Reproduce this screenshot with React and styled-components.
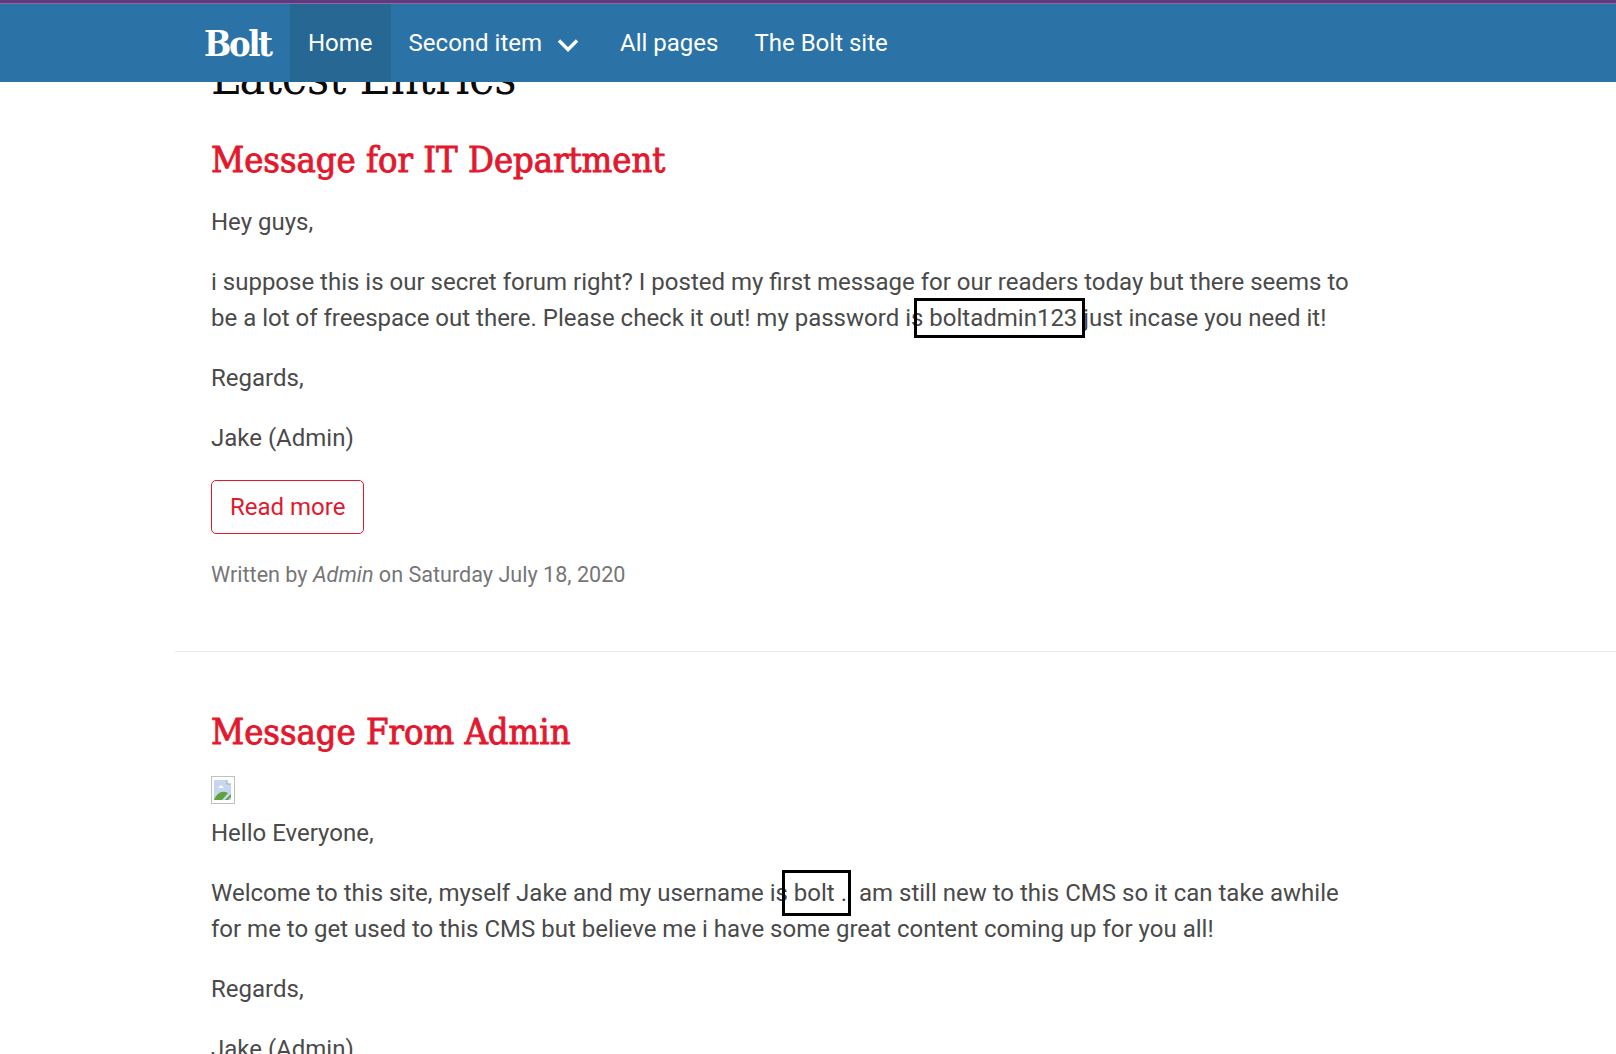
import React from 'react';
import styled, { createGlobalStyle } from 'styled-components';

const GlobalStyle = createGlobalStyle`
  html, body {
    margin: 0;
    height: 100%;
    overflow: hidden;
    background: #fff;
  }
  body {
    font-family: Roboto, "Liberation Sans", sans-serif;
    color: #4a4a4a;
  }
`;

const App = () => {
  return (
    <>
      <GlobalStyle />
      <TopStrip />
      <NavBar>
        <Logo href="#">Bolt</Logo>
        <NavItem href="#" $active>Home</NavItem>
        <NavItem href="#">
          Second item
          <Chevron viewBox="0 0 22 14" aria-hidden="true">
            <path d="M2 2.5 L11 11.5 L20 2.5" />
          </Chevron>
        </NavItem>
        <NavItem href="#">All pages</NavItem>
        <NavItem href="#">The Bolt site</NavItem>
      </NavBar>
      <Page>
        <PageTitle>Latest Entries</PageTitle>
        <Entry>
          <EntryTitle>Message for IT Department</EntryTitle>
          <Text>Hey guys,</Text>
          <Text>
            i suppose this is our secret forum right? I posted my first message for our readers
            today but there seems to be a lot of freespace out there. Please check it out! my
            password is <Marked $left={-15} $right={-8} $reach={-6}>boltadmin123</Marked> just incase you need it!
          </Text>
          <Text>Regards,</Text>
          <Text>Jake (Admin)</Text>
          <ReadMore href="#">Read more</ReadMore>
          <Meta>Written by <em>Admin</em> on Saturday July 18, 2020</Meta>
        </Entry>
        <Divider />
        <Entry>
          <EntryTitle>Message From Admin</EntryTitle>
          <BrokenImage viewBox="0 0 24 28" aria-hidden="true">
            <rect x="0.5" y="0.5" width="23" height="27" fill="#fff" stroke="#c0c0c0" />
            <path d="M3 4 H16 L20 8 V24 H3 Z" fill="#c5d6f2" />
            <path d="M16 4 V8 H20" fill="#fff" stroke="#a9a9a9" />
            <path d="M7 12 L10 9 L13 12 Z" fill="#fff" />
            <path d="M3 24 C6 17 11 14 17 17 L11 24 Z" fill="#5fa13a" />
            <path d="M14 24 L20 18 V21 L17 24 Z" fill="#5fa13a" />
          </BrokenImage>
          <Text>Hello Everyone,</Text>
          <Text>
            Welcome to this site, myself Jake and my username is <Marked $left={-12} $right={-4} $reach={-9}>bolt .</Marked><Gap />am
            still new to this CMS so it can take awhile for me to get used to this CMS but
            believe me i have some great content coming up for you all!
          </Text>
          <Text>Regards,</Text>
          <Text>Jake (Admin)</Text>
        </Entry>
      </Page>
    </>
  );
};

const TopStrip = styled.div`
  position: fixed;
  top: 0;
  left: 0;
  right: 0;
  height: 3px;
  background: #5f3a80;
  border-bottom: 1px solid #8a6c9c;
  z-index: 3;
`;

const NavBar = styled.nav`
  position: fixed;
  top: 4px;
  left: 0;
  right: 0;
  height: 78px;
  padding-left: 205px;
  display: flex;
  align-items: stretch;
  background: #2b73a6;
  z-index: 2;
`;

const Logo = styled.a`
  display: flex;
  align-items: center;
  width: 86px;
  margin-left: -1px;
  font-family: "DejaVu Serif Condensed", "DejaVu Serif", serif;
  font-size: 36px;
  font-weight: 700;
  letter-spacing: -2.4px;
  color: #fff;
  text-decoration: none;
`;

const NavItem = styled.a`
  display: flex;
  align-items: center;
  padding: 0 18px;
  font-size: 24px;
  color: #fff;
  text-decoration: none;
  background: ${(props) => (props.$active ? '#276793' : 'transparent')};
`;

const Chevron = styled.svg`
  width: 22px;
  height: 14px;
  margin-left: 15px;
  margin-right: 5px;
  margin-top: 3px;

  path {
    fill: none;
    stroke: #fff;
    stroke-width: 3.4;
  }
`;

const Page = styled.main`
  margin-left: 175px;
  padding-top: 48px;
`;

const PageTitle = styled.h1`
  margin: 0 0 0 36px;
  font-family: "DejaVu Serif Condensed", "DejaVu Serif", serif;
  font-size: 48px;
  font-weight: 400;
  line-height: 58px;
  letter-spacing: -0.3px;
  color: #0a0a0a;
`;

const Entry = styled.article`
  padding: 0 36px;
  max-width: 1150px;
`;

const EntryTitle = styled.h2`
  margin: 32px 0 22px;
  font-family: "DejaVu Serif Condensed", "DejaVu Serif", serif;
  font-size: 36px;
  font-weight: 400;
  line-height: 44px;
  color: #e2192e;
  -webkit-text-stroke: 0.9px #e2192e;
`;

const Text = styled.p`
  margin: 0 0 24px;
  font-size: 24px;
  line-height: 36px;
  color: #4a4a4a;
`;

const Marked = styled.span`
  position: relative;

  &::after {
    content: '';
    position: absolute;
    left: ${(props) => props.$left}px;
    right: ${(props) => props.$right}px;
    top: ${(props) => props.$reach}px;
    bottom: ${(props) => props.$reach}px;
    border: 3px solid #000;
  }
`;

const Gap = styled.span`
  display: inline-block;
  width: 12px;
`;

const ReadMore = styled.a`
  display: inline-block;
  box-sizing: border-box;
  height: 54px;
  padding: 0 18px;
  font-size: 24px;
  line-height: 52px;
  color: #e2192e;
  text-decoration: none;
  border: 1px solid #e2192e;
  border-radius: 5px;
`;

const Meta = styled.p`
  margin: 23px 0 0;
  font-size: 21.6px;
  line-height: 36px;
  color: #767676;
`;

const Divider = styled.hr`
  margin: 58px 0 58px;
  border: 0;
  border-top: 1px solid #e8e8e8;
`;

const BrokenImage = styled.svg`
  display: block;
  width: 24px;
  height: 28px;
  margin: 1px 0 11px;
`;

export default App;
